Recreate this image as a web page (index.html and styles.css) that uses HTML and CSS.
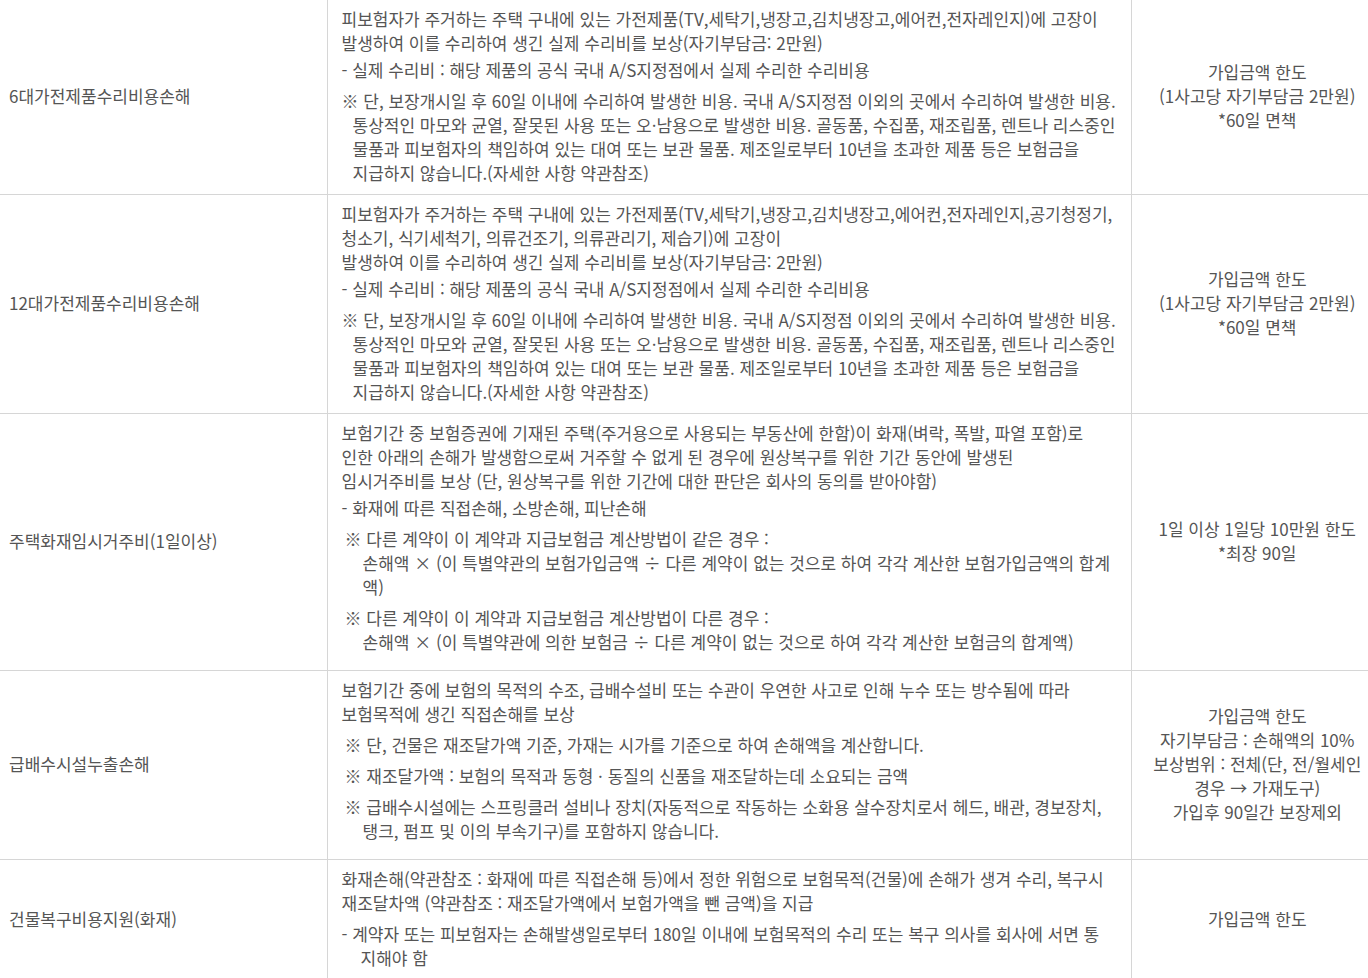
FILE: index.html
```html
<!DOCTYPE html>
<html lang="ko">
<head>
  <meta charset="UTF-8">
  <title>보장내용</title>
  <meta name="viewport" content="width=device-width, initial-scale=1.0">
  <link rel="stylesheet" href="styles.css">
</head>
<body>

  <table class="coverage-table">
    <colgroup>
      <col class="col-name">
      <col class="col-desc">
      <col class="col-limit">
    </colgroup>
    <tbody>
      <tr>
        <td class="name">6대가전제품수리비용손해</td>
        <td class="desc">
          <p>피보험자가 주거하는 주택 구내에 있는 가전제품(TV,세탁기,냉장고,김치냉장고,에어컨,전자레인지)에 고장이<br>발생하여 이를 수리하여 생긴 실제 수리비를 보상(자기부담금: 2만원)</p>
          <p class="sub">- 실제 수리비 : 해당 제품의 공식 국내 A/S지정점에서 실제 수리한 수리비용</p>
          <p class="note">※ 단, 보장개시일 후 60일 이내에 수리하여 발생한 비용. 국내 A/S지정점 이외의 곳에서 수리하여 발생한 비용.<br>통상적인 마모와 균열, 잘못된 사용 또는 오·남용으로 발생한 비용. 골동품, 수집품, 재조립품, 렌트나 리스중인<br>물품과 피보험자의 책임하여 있는 대여 또는 보관 물품. 제조일로부터 10년을 초과한 제품 등은 보험금을<br>지급하지 않습니다.(자세한 사항 약관참조)</p>
        </td>
        <td class="limit">가입금액 한도<br>(1사고당 자기부담금 2만원)<br>*60일 면책</td>
      </tr>
      <tr>
        <td class="name">12대가전제품수리비용손해</td>
        <td class="desc">
          <p>피보험자가 주거하는 주택 구내에 있는 가전제품(TV,세탁기,냉장고,김치냉장고,에어컨,전자레인지,공기청정기,<br>청소기, 식기세척기, 의류건조기, 의류관리기, 제습기)에 고장이<br>발생하여 이를 수리하여 생긴 실제 수리비를 보상(자기부담금: 2만원)</p>
          <p class="sub">- 실제 수리비 : 해당 제품의 공식 국내 A/S지정점에서 실제 수리한 수리비용</p>
          <p class="note">※ 단, 보장개시일 후 60일 이내에 수리하여 발생한 비용. 국내 A/S지정점 이외의 곳에서 수리하여 발생한 비용.<br>통상적인 마모와 균열, 잘못된 사용 또는 오·남용으로 발생한 비용. 골동품, 수집품, 재조립품, 렌트나 리스중인<br>물품과 피보험자의 책임하여 있는 대여 또는 보관 물품. 제조일로부터 10년을 초과한 제품 등은 보험금을<br>지급하지 않습니다.(자세한 사항 약관참조)</p>
        </td>
        <td class="limit">가입금액 한도<br>(1사고당 자기부담금 2만원)<br>*60일 면책</td>
      </tr>
      <tr>
        <td class="name">주택화재임시거주비(1일이상)</td>
        <td class="desc">
          <p>보험기간 중 보험증권에 기재된 주택(주거용으로 사용되는 부동산에 한함)이 화재(벼락, 폭발, 파열 포함)로<br>인한 아래의 손해가 발생함으로써 거주할 수 없게 된 경우에 원상복구를 위한 기간 동안에 발생된<br>임시거주비를 보상 (단, 원상복구를 위한 기간에 대한 판단은 회사의 동의를 받아야함)</p>
          <p class="sub">- 화재에 따른 직접손해, 소방손해, 피난손해</p>
          <ul class="notes">
            <li>※ 다른 계약이 이 계약과 지급보험금 계산방법이 같은 경우 :<br>손해액 × (이 특별약관의 보험가입금액 ÷ 다른 계약이 없는 것으로 하여 각각 계산한 보험가입금액의 합계<br>액)</li>
            <li>※ 다른 계약이 이 계약과 지급보험금 계산방법이 다른 경우 :<br>손해액 × (이 특별약관에 의한 보험금 ÷ 다른 계약이 없는 것으로 하여 각각 계산한 보험금의 합계액)</li>
          </ul>
        </td>
        <td class="limit">1일 이상 1일당 10만원 한도<br>*최장 90일</td>
      </tr>
      <tr>
        <td class="name">급배수시설누출손해</td>
        <td class="desc">
          <p>보험기간 중에 보험의 목적의 수조, 급배수설비 또는 수관이 우연한 사고로 인해 누수 또는 방수됨에 따라<br>보험목적에 생긴 직접손해를 보상</p>
          <ul class="notes">
            <li>※ 단, 건물은 재조달가액 기준, 가재는 시가를 기준으로 하여 손해액을 계산합니다.</li>
            <li>※ 재조달가액 : 보험의 목적과 동형 · 동질의 신품을 재조달하는데 소요되는 금액</li>
            <li>※ 급배수시설에는 스프링클러 설비나 장치(자동적으로 작동하는 소화용 살수장치로서 헤드, 배관, 경보장치,<br>탱크, 펌프 및 이의 부속기구)를 포함하지 않습니다.</li>
          </ul>
        </td>
        <td class="limit">가입금액 한도<br>자기부담금 : 손해액의 10%<br>보상범위 : 전체(단, 전/월세인<br>경우 → 가재도구)<br>가입후 90일간 보장제외</td>
      </tr>
      <tr>
        <td class="name">건물복구비용지원(화재)</td>
        <td class="desc">
          <p>화재손해(약관참조 : 화재에 따른 직접손해 등)에서 정한 위험으로 보험목적(건물)에 손해가 생겨 수리, 복구시<br>재조달차액 (약관참조 : 재조달가액에서 보험가액을 뺀 금액)을 지급</p>
          <p class="sub dash">- 계약자 또는 피보험자는 손해발생일로부터 180일 이내에 보험목적의 수리 또는 복구 의사를 회사에 서면 통<br>지해야 함</p>
        </td>
        <td class="limit">가입금액 한도</td>
      </tr>
    </tbody>
  </table>

</body>
</html>
```

FILE: styles.css
```css
body {
  margin: 0;
  padding: 0;
  background: #fff;
  font-family: "Noto Sans CJK KR", "Noto Sans", sans-serif;
  font-size: 17px;
  line-height: 24px;
  color: #555;
}

.coverage-table {
  width: 100%;
  table-layout: fixed;
  border-collapse: collapse;
}

.col-name {
  width: 327px;
}

.col-desc {
  width: 804px;
}

.coverage-table td {
  padding: 7px 9px 9px;
  border-bottom: 1px solid #d6d6d6;
  border-left: 1px solid #d6d6d6;
  vertical-align: middle;
}

.coverage-table td:first-child {
  border-left: none;
}

.name {
  text-align: left;
}

.desc {
  padding-left: 14px !important;
  padding-right: 8px !important;
}

.desc p {
  margin: 0;
}

.desc .sub {
  margin-top: 3px;
}

.desc .sub.dash {
  margin-top: 7px;
  padding-left: 19px;
  text-indent: -19px;
}

.desc .note {
  margin-top: 7px;
  padding-left: 11px;
  text-indent: -11px;
}

.notes {
  list-style: none;
  margin: 0 0 7px 3px;
  padding: 0;
}

.notes li {
  margin-top: 7px;
  padding-left: 18px;
  text-indent: -18px;
}

.limit {
  text-align: center;
  padding-left: 17px !important;
  padding-right: 2px !important;
}
```
